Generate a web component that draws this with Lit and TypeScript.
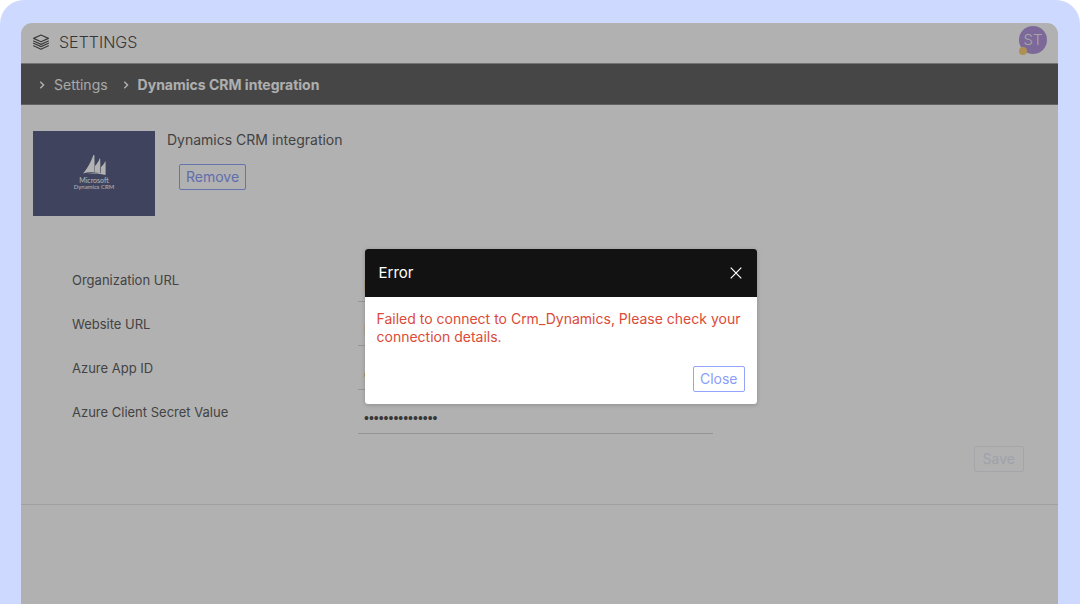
import { LitElement, html, css, svg } from "lit";
import { customElement } from "lit/decorators.js";

const chevron = html`<svg class="chevron" viewBox="0 0 6 8" aria-hidden="true"><path d="M1.3 .8 4.6 4 1.3 7.2" /></svg>`;

const sails = svg`
  <path d="M0 18.6 C4 14 8 7 10.4 0 L11.4 0 L11.6 17.4 C7 17 3 17.6 0 18.6Z" />
  <path d="M12 17.4 L12 11 C14 9 16 6 16.6 3.6 L17.2 3.6 L17.4 18 C15.5 17.6 13.5 17.4 12 17.4Z" />
  <path d="M18 18 L18 12 C20 10.5 21.4 8.5 22 6.6 L22.6 6.6 L22.6 20 C18 18.6 12 18 4 18.8 C10 17.6 14 17.6 18 18Z" />`;

const fields = [
  { id: "org-url", label: "Organization URL", type: "text", value: "h" },
  { id: "site-url", label: "Website URL", type: "text", value: "h" },
  { id: "app-id", label: "Azure App ID", type: "text", value: "c" },
  { id: "secret", label: "Azure Client Secret Value", type: "password", value: "***************" },
];

@customElement("app-root")
export class AppRoot extends LitElement {
  static styles = css`
    :host {
      display: block;
      height: 100vh;
      overflow: hidden;
      background: #fff;
      font: 14px/18px Inter, "Noto Sans", sans-serif;
      color: #616161;
    }
    * { box-sizing: border-box; }
    h1, h2, p, ol { margin: 0; padding: 0; font-weight: 400; }
    button, input { font: inherit; margin: 0; }
    .frame {
      display: flex;
      flex-direction: column;
      height: 100%;
      padding: 23px 22px 0 21px;
      background: #cdd9ff;
      border-radius: 24px 24px 0 0;
    }
    .app {
      position: relative;
      flex: 1;
      overflow: hidden;
      border-radius: 11px 11px 0 0;
      background: #fefefe;
    }
    .top {
      display: flex;
      align-items: center;
      height: 41px;
      padding: 0 11px 2px;
      border-bottom: 1px solid #a8a8a8;
    }
    .layers { width: 18px; height: 18px; margin-right: 9px; fill: none; stroke: #555; stroke-width: 1.2; stroke-linejoin: round; stroke-linecap: round; }
    .top h1 { flex: 1; font-size: 16px; line-height: 24px; font-weight: 300; color: #505050; }
    .avatar {
      position: relative;
      display: grid;
      place-items: center;
      width: 28px;
      height: 28px;
      margin-bottom: 4px;
      border-radius: 50%;
      background: #b297dd;
      color: #eee;
      font: 300 15px/20px Inter, sans-serif;
    }
    .status { position: absolute; left: 0; bottom: -1px; width: 8px; height: 8px; border-radius: 50%; background: #f9cf78; }
    .crumbs {
      display: flex;
      align-items: center;
      height: 41px;
      padding: 2px 18px 0;
      background: #656565;
      border-bottom: 1px solid #8d8d8d;
      color: #fafafa;
      list-style: none;
    }
    .crumbs li { display: flex; align-items: center; gap: 9px; margin-right: 15px; }
    .crumbs a { color: #f0f0f0; text-decoration: none; }
    .current { font-weight: 700; }
    .chevron { width: 6px; height: 8px; fill: none; stroke: #fff; stroke-width: 1.4; }
    .content { padding: 26px 12px 32px; border-bottom: 1px solid #e6e6e6; }
    .intro { display: flex; gap: 12px; }
    .logo {
      display: flex;
      flex-direction: column;
      align-items: center;
      width: 122px;
      height: 85px;
      padding-top: 24px;
      background: #5b6186;
      color: #fff;
      font: 7px/8px Lato, sans-serif;
    }
    .logo svg { width: 23px; height: 20px; margin-bottom: 1px; fill: #fff; }
    .logo .small { font-size: 6px; line-height: 6px; }
    .intro .info { display: flex; flex-direction: column; align-items: flex-start; gap: 15px; }
    .btn {
      height: 26px;
      padding: 0 6px;
      border: 1px solid #93a5fb;
      border-radius: 2px;
      background: transparent;
      color: #8b9df8;
      line-height: 22px;
    }
    .intro .btn { margin-left: 12px; }
    .form { display: grid; gap: 8px; padding: 50px 39px 0; }
    .row { display: grid; grid-template-columns: 286px minmax(0, 355px); height: 36px; }
    .row label { padding-top: 5px; font-size: 13px; }
    .row input {
      height: 36px;
      padding: 4px 6px 0;
      border: 0;
      border-bottom: 1px solid #d6d6d6;
      border-radius: 0;
      outline: 0;
      background: transparent;
      color: #505050;
    }
    .row input[type="password"] { font-family: "Liberation Sans", sans-serif; }
    .actions { display: flex; justify-content: flex-end; padding: 12px 22px 0; }
    .actions .btn { padding: 0 8px; border-color: #eeeef4; color: #e4e7f5; }
    .scrim { position: absolute; inset: 0; background: rgba(0, 0, 0, 0.3); }
    .dialog {
      position: absolute;
      top: 226px;
      left: calc(50% - 175px);
      width: 392px;
      overflow: hidden;
      border-radius: 3px;
      background: #fff;
      box-shadow: 0 1px 4px rgba(0, 0, 0, 0.2);
    }
    .head { display: flex; align-items: center; justify-content: space-between; height: 48px; padding: 0 14px; background: #121212; color: #fff; }
    .head h2 { font-size: 15px; line-height: 20px; }
    .x { display: grid; width: 14px; height: 14px; padding: 1px; border: 0; background: none; }
    .x svg { width: 12px; height: 12px; stroke: #fff; stroke-width: 1.2; }
    .msg { padding: 13px 12px 20px; color: #dc4a38; }
    .foot { display: flex; justify-content: flex-end; padding: 0 12px 12px; }
  `;

  render() {
    return html`
      <div class="frame">
        <div class="app">
          <header class="top">
            <svg class="layers" viewBox="0 0 18 18" aria-hidden="true">
              <path d="M9 2 16.4 5.4 9 8.8 1.6 5.4Z" />
              <path d="M1.6 8 9 11.4 16.4 8M1.6 10.2 9 13.6l7.4-3.4M1.6 12.8 9 16.2l7.4-3.4" />
            </svg>
            <h1>SETTINGS</h1>
            <div class="avatar">ST<span class="status"></span></div>
          </header>
          <nav>
            <ol class="crumbs">
              <li>${chevron}<a href="#settings">Settings</a></li>
              <li>${chevron}<span class="current">Dynamics CRM integration</span></li>
            </ol>
          </nav>
          <main class="content">
            <section class="intro">
              <div class="logo">
                <svg viewBox="0 0 23 20" aria-hidden="true">${sails}</svg>
                <span>Microsoft</span><span class="small">Dynamics CRM</span>
              </div>
              <div class="info">
                <p>Dynamics CRM integration</p>
                <button class="btn" type="button">Remove</button>
              </div>
            </section>
            <form>
              <div class="form">
                ${fields.map(
                  (f) => html`<div class="row">
                    <label for=${f.id}>${f.label}</label>
                    <input id=${f.id} type=${f.type} .value=${f.value} autocomplete="off" />
                  </div>`
                )}
              </div>
              <div class="actions"><button class="btn" type="button">Save</button></div>
            </form>
          </main>
          <div class="scrim"></div>
          <section class="dialog" role="alertdialog" aria-labelledby="err-title" aria-describedby="err-msg">
            <div class="head">
              <h2 id="err-title">Error</h2>
              <button class="x" type="button" aria-label="Dismiss">
                <svg viewBox="0 0 12 12" aria-hidden="true"><path d="M.7.7 11.3 11.3M11.3.7.7 11.3" /></svg>
              </button>
            </div>
            <p class="msg" id="err-msg">Failed to connect to Crm_Dynamics, Please check your connection details.</p>
            <div class="foot"><button class="btn" type="button">Close</button></div>
          </section>
        </div>
      </div>
    `;
  }
}
